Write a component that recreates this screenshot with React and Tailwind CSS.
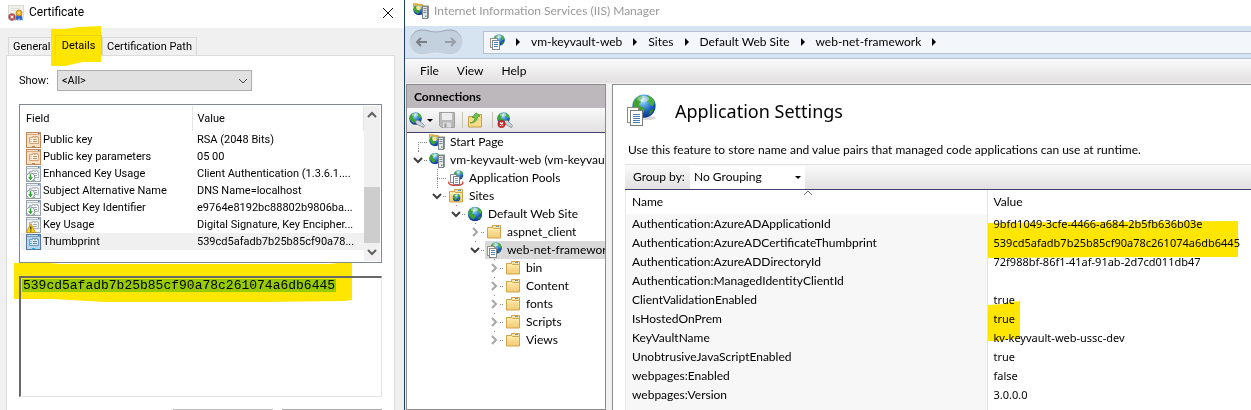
import React, { useId } from "react";

function Globe({ x = 0, y = 0, s = 16 }) {
  const id = useId();
  return (
    <svg x={x} y={y} width={s} height={s} viewBox="0 0 32 32">
      <defs>
        <radialGradient id={id} cx="0.42" cy="0.25" r="0.8">
          <stop offset="0" stopColor="#c4e8fb" />
          <stop offset="0.3" stopColor="#5aa9e6" />
          <stop offset="0.65" stopColor="#1c5cc0" />
          <stop offset="1" stopColor="#0a2a78" />
        </radialGradient>
      </defs>
      <circle cx="16" cy="16" r="15.500" fill={`url(#${id})`} />
      <path d="M2 12C4 6 8 3 12 2l2 3-3 3 1 3-3 2 1 3 4 1 3 3-1 4-4 3C5 23 1 18 2 12z" fill="#3fa32c" />
      <path d="M20 2c5 1 8 4 10 9l-2 5-3-1-2-4-3-1 1-4z" fill="#48b034" />
      <path d="M24 22l5-2c-1 4-4 7-7 8z" fill="#2f8f27" />
      <ellipse cx="15" cy="6.500" rx="8" ry="4" fill="#fff" opacity="0.400" />
    </svg>
  );
}

function Pages({ x = 0, y = 0, w = 16, h = 19 }) {
  return (
    <svg x={x} y={y} width={w} height={h} viewBox="0 0 16 19">
      <rect x="0.5" y="0.5" width="11" height="15" fill="#fffef6" stroke="#8f897e" />
      <rect x="3.5" y="3.5" width="12" height="15" fill="#fff" stroke="#77797e" />
      <path d="M6 7.5h7M6 9.5h7M6 11.5h7M6 13.5h7M6 15.5h7" stroke="#3f7fba" />
    </svg>
  );
}

function SiteIcon() {
  return (
    <svg viewBox="0 0 16 16" className="size-4 shrink-0">
      <Globe x={4} y={0} s={12} />
      <rect x="1.500" y="4.500" width="7" height="9" fill="#fffef6" stroke="#9a958a" />
      <rect x="3.500" y="6.500" width="7" height="9" fill="#fff" stroke="#85878c" />
      <path d="M5 8.500h4M5 10.500h4M5 12.500h4" stroke="#4a86bd" />
    </svg>
  );
}

function SettingsIcon() {
  return (
    <svg viewBox="0 0 32 34" className="h-[34px] w-8 shrink-0">
      <ellipse cx="21" cy="24" rx="9" ry="2" fill="#000" opacity="0.150" />
      <Globe x={6} y={0} s={24} />
      <Pages x={1} y={13} w={16} h={19} />
    </svg>
  );
}

function GlobeIcon() {
  return (
    <svg viewBox="0 0 16 16" className="size-4 shrink-0">
      <Globe x={0.5} y={0.5} s={15} />
    </svg>
  );
}

function ServerIcon({ star = false }) {
  return (
    <svg viewBox="0 0 16 16" className="size-4 shrink-0">
      <Globe x={0} y={0.5} s={12} />
      {star && (
        <>
          <path d="M.5 4V1h3.500l1 1h4v3" fill="none" stroke="#f0a51f" strokeWidth="1.600" />
          <path d="M3 4l3-1 2 2-1 2-3 0z" fill="#ffe08a" />
        </>
      )}
      <path d="M9 3.500l1.500-1H16v12L14.500 16H9z" fill="#8a9096" />
      <rect x="9.5" y="3.5" width="5" height="12" fill="#e4e8ea" stroke="#7b848a" />
      <path d="M10.500 5.500h3M10.500 7.500h3M10.500 9.500h3" stroke="#7f888e" />
      <rect x="12" y="12.500" width="1.500" height="1.500" fill="#53b43b" />
    </svg>
  );
}

function PoolsIcon() {
  return (
    <svg viewBox="0 0 16 16" className="size-4 shrink-0">
      <Globe x={5.500} y={0} s={10} />
      <path d="M1 11.500c-1.500 3 3 4 7 4s8-1 6.500-4" fill="none" stroke="#d5403a" strokeWidth="1.300" />
      <path d="M2.500 4.500h6v8h-6z" fill="#fff" stroke="#85898e" />
      <path d="M5.500 6.500h6v8h-6z" fill="#fff" stroke="#75797e" />
      <path d="M7 8.500h3M7 10.500h3M7 12.500h3" stroke="#6f9cc4" />
    </svg>
  );
}

function FolderIcon({ globe = false }) {
  const id = useId();
  return (
    <svg viewBox="0 0 16 16" className="size-4 shrink-0">
      <defs>
        <linearGradient id={id} x1="0" y1="0" x2="0" y2="1">
          <stop offset="0" stopColor="#fdeaa6" />
          <stop offset="1" stopColor="#f2cb76" />
        </linearGradient>
      </defs>
      <path d="M6.500 4V1.500h8V5" fill="#f7e3a4" stroke="#cfa44b" />
      <path d="M10 2.500h3" stroke="#5f9fd0" />
      <path d="M1.500 3.500h5l1 1h7v9.500h-13z" fill={`url(#${id})`} stroke="#cfa44b" />
      <path d="M2 5.500h12" stroke="#fff3c6" strokeWidth="0.600" />
      {globe && <Globe x={4.500} y={5.500} s={8} />}
    </svg>
  );
}

function CertIcon() {
  return (
    <svg viewBox="0 0 16 16" className="size-4 shrink-0">
      <rect x="0.500" y="0.500" width="15" height="12" fill="#f1f0ec" stroke="#dad9d3" />
      <path d="M3 3.500h9M3 5.500h5" stroke="#e0ded7" />
      <path d="M8.500 10l-1.500 5.500 2-1 1 1.500 1-3 1 3 1-1.500 2 1L13.500 10z" fill="#2b66cf" />
      <circle cx="11" cy="8" r="3" fill="#f0b323" stroke="#b97c0e" strokeWidth="0.700" />
      <circle cx="11" cy="8" r="1.100" fill="#fde99a" />
      <circle cx="4" cy="12" r="3.600" fill="#c63a36" stroke="#a09a9a" strokeWidth="0.800" />
      <path d="M2.600 10.600l2.800 2.800M5.400 10.600l-2.800 2.800" stroke="#fff" strokeWidth="1.200" />
    </svg>
  );
}

const FIELD_COLORS = {
  v1: ["#fbe0c4", "#c0885a"],
  ext: ["#eef1f4", "#98a0a8"],
  crit: ["#eef1f4", "#98a0a8"],
  prop: ["#b4d6f0", "#55799c"],
};

function FieldIcon({ kind }) {
  const [fill, line] = FIELD_COLORS[kind];
  return (
    <svg viewBox="0 0 16 16" className="size-4 shrink-0">
      <rect x="0.500" y="0.500" width="14" height="15" fill={fill} stroke={line} />
      <path d="M1 2.500h13" stroke={line} strokeWidth="0.600" />
      <path d="M3.500 5.500h3v-1h2v1h1v-1h2v1h1v6h-9z" fill="#fff" fillOpacity="0.500" stroke={line} strokeWidth="0.700" />
      <path d="M4.500 7.500h1M4.500 9.500h1M7 7.500h4M7 9.500h4" stroke={line} strokeWidth="0.900" />
      <path d="M6 14.500h3" stroke={kind === "prop" ? "#17b4f5" : line} />
      <path d="M12 1.500h1.500" stroke="#3a78c2" />
      {kind === "prop" && <path d="M4 9.500h2" stroke="#17b4f5" />}
      {kind === "ext" && (
        <>
          <circle cx="4.500" cy="11.200" r="4.200" fill="#fff" stroke="#7d8388" strokeWidth="0.900" />
          <path d="M3.700 8.200h1.600v3h1.600l-2.400 3-2.400-3h1.600z" fill="#2ca32c" />
        </>
      )}
      {kind === "crit" && (
        <>
          <path d="M4.800 6.500l4.700 9H.2z" fill="#fcd116" stroke="#b98a05" strokeWidth="0.700" />
          <path d="M4.800 9.500v3M4.800 13.500v1" stroke="#222" strokeWidth="1.200" />
        </>
      )}
    </svg>
  );
}

function Chevron({ dir = "down", bold = false, className = "" }) {
  const d = { down: "M1 3l4 4 4-4", up: "M1 7l4-4 4 4" }[dir];
  return (
    <svg viewBox="0 0 10 10" className={`size-[10px] shrink-0 ${className}`} fill="none" stroke="currentColor" strokeWidth={bold ? 2 : 1}>
      <path d={d} />
    </svg>
  );
}

const FIELDS = [
  ["v1", "Public key", "RSA (2048 Bits)"],
  ["v1", "Public key parameters", "05 00"],
  ["ext", "Enhanced Key Usage", "Client Authentication (1.3.6.1...."],
  ["ext", "Subject Alternative Name", "DNS Name=localhost"],
  ["ext", "Subject Key Identifier", "e9764e8192bc88802b9806ba..."],
  ["crit", "Key Usage", "Digital Signature, Key Encipher..."],
  ["prop", "Thumbprint", "539cd5afadb7b25b85cf90a78..."],
];

function CertificateDialog() {
  return (
    <section className="flex w-[404px] shrink-0 flex-col bg-[#f0f0f0] font-[Roboto,sans-serif] text-[11px] leading-[17px]">
      <header className="flex h-7 shrink-0 items-center gap-[5px] bg-white pr-[10px] pb-[3px] pl-2">
        <CertIcon />
        <h1 className="flex-1 text-[12px]">Certificate</h1>
        <button aria-label="Close" className="size-3">
          <svg viewBox="0 0 12 12" className="size-3" stroke="#111" fill="none">
            <path d="M1 1l10 10M11 1L1 11" />
          </svg>
        </button>
      </header>
      <div className="flex flex-1 flex-col pt-[7px] pr-[9px] pl-[6px]">
        <div role="tablist" className="flex h-5 shrink-0 items-end pl-[2px]">
          <button role="tab" aria-selected="false" className="h-[18px] w-[47px] border border-b-0 border-[#d9d9d9] pl-1 text-left">General</button>
          <div className="relative h-5 w-[47px]">
            <svg viewBox="0 0 51 41" className="absolute -top-[9px] -left-1 h-[41px] w-[51px]">
              <path d="M0 3l14 0 13-2 23-1v36l-18 0-18 4-14 0z" fill="#ffe600" />
            </svg>
            <button role="tab" aria-selected="true" className="relative h-full w-full border border-b-0 border-[#e9d31c]">Details</button>
          </div>
          <button role="tab" aria-selected="false" className="h-[18px] border border-b-0 border-[#d9d9d9] px-1">Certification Path</button>
        </div>
        <div className="flex flex-1 flex-col border border-b-0 border-[#dcdcdc] bg-white pt-[14px] pr-3 pl-3">
          <div className="flex shrink-0 items-center">
            <label htmlFor="show" className="w-[38px]">Show:</label>
            <div className="relative">
              <select id="show" className="block h-[21px] w-[195px] appearance-none border border-[#adadad] bg-[#e1e1e1] pl-1 text-[11px] leading-[17px]">
                <option>&lt;All&gt;</option>
              </select>
              <Chevron className="pointer-events-none absolute top-[6px] right-1 text-[#444]" />
            </div>
          </div>
          <div className="mt-[13px] flex h-[159px] shrink-0 border border-[#828790] p-px">
            <div className="flex-1">
              <table className="w-full table-fixed border-collapse text-left">
                <thead>
                  <tr className="h-[25px]">
                    <th className="w-[171px] border-r border-[#e5e5e5] p-0 pl-[5px] font-normal">Field</th>
                    <th className="border-r border-[#e5e5e5] p-0 pl-[5px] font-normal">Value</th>
                  </tr>
                </thead>
                <tbody>
                  {FIELDS.map(([kind, name, value]) => (
                    <tr key={name} className={`h-[17px] ${kind === "prop" ? "bg-[#f0f0f0]" : ""}`}>
                      <td className="p-0">
                        <div className="flex items-center gap-px whitespace-nowrap pl-[5px]">
                          <FieldIcon kind={kind} />
                          {name}
                        </div>
                      </td>
                      <td className="p-0 pl-[5px] whitespace-nowrap">{value}</td>
                    </tr>
                  ))}
                </tbody>
              </table>
            </div>
            <div className="flex w-4 flex-col items-center bg-[#f0f0f0] py-1">
              <Chevron dir="up" bold className="text-[#606060]" />
              <div className="flex-1" />
              <div className="h-14 w-full bg-[#cdcdcd]" />
              <Chevron dir="down" bold className="mt-1 text-[#606060]" />
            </div>
          </div>
          <div className="relative mt-[13px] h-[121px] shrink-0">
            <svg viewBox="0 0 338 39" className="absolute -top-[13px] -left-[5px] h-[39px] w-[338px]">
              <path d="M0 0h36l10 1h270l8-1h14v37l-8 1-80 1H90L40 36H0z" fill="#ffe600" />
            </svg>
            <div className="absolute top-[3px] left-[3px] h-[13px] w-[314px] bg-[#99cc00]" />
            <textarea
              aria-label="Thumbprint value"
              readOnly
              defaultValue="539cd5afadb7b25b85cf90a78c261074a6db6445"
              className="relative block h-full w-full resize-none border-t-2 border-r border-b border-l-2 border-t-[#696969] border-r-[#e3e3e3] border-b-[#e3e3e3] border-l-[#696969] bg-transparent px-[2px] pt-px font-['Liberation_Mono',monospace] text-[13px] leading-[13px]"
            />
          </div>
          <div className="mt-3 flex justify-end gap-[9px]">
            <button aria-label="Edit Properties" className="h-[23px] w-[100px] border border-[#bfbfbf] bg-[#cccccc]" />
            <button aria-label="Copy to File" className="h-[23px] w-[100px] border border-[#adadad] bg-[#e1e1e1]" />
          </div>
        </div>
      </div>
    </section>
  );
}

const CRUMBS = ["vm-keyvault-web", "Sites", "Default Web Site", "web-net-framework"];

function Triangle() {
  return (
    <svg viewBox="0 0 4 8" className="h-2 w-1 shrink-0">
      <path d="M0 0l4 4-4 4z" />
    </svg>
  );
}

const TREE = [
  { level: 0, icon: <ServerIcon star />, label: "Start Page", first: true },
  { level: 0, icon: <ServerIcon />, label: "vm-keyvault-web (vm-keyvault-web)", state: "open" },
  { level: 1, icon: <PoolsIcon />, label: "Application Pools" },
  { level: 1, icon: <FolderIcon globe />, label: "Sites", state: "open" },
  { level: 2, icon: <GlobeIcon />, label: "Default Web Site", state: "open" },
  { level: 3, icon: <FolderIcon />, label: "aspnet_client", state: "closed" },
  { level: 3, icon: <SiteIcon />, label: "web-net-framework", state: "open", selected: true },
  { level: 4, icon: <FolderIcon />, label: "bin", state: "closed" },
  { level: 4, icon: <FolderIcon />, label: "Content", state: "closed" },
  { level: 4, icon: <FolderIcon />, label: "fonts", state: "closed" },
  { level: 4, icon: <FolderIcon />, label: "Scripts", state: "closed" },
  { level: 4, icon: <FolderIcon />, label: "Views", state: "closed" },
];

const INDENT = ["pl-px", "pl-5", "pl-[39px]", "pl-[58px]", "pl-[77px]"];

function Branch({ state, first }) {
  return (
    <svg viewBox="0 0 20 18" className="h-[18px] w-5 shrink-0" fill="none">
      <g stroke="#8a8a8a" strokeDasharray="1 1">
        {!state && <path d={first ? "M10.500 9v9" : "M10.500 0v18"} />}
        {!state && <path d="M10 9.500h10" />}
        {state && <path d="M10.500 0v2M16 9.500h4" />}
      </g>
      {state === "open" && <path d="M6 7l4 4 4-4" stroke="#404040" strokeWidth="2" />}
      {state === "closed" && <path d="M8 5l4 4-4 4" stroke="#a6a6a6" strokeWidth="2" />}
    </svg>
  );
}

function Connections() {
  return (
    <aside className="flex w-[200px] shrink-0 flex-col overflow-hidden border border-[#8c8c8c] bg-white">
      <h2 className="flex h-[23px] shrink-0 items-center bg-[#bcb8bb] pl-[7px] font-bold">Connections</h2>
      <div className="flex h-[25px] shrink-0 items-center border-b border-[#41416b] bg-linear-to-b from-[#fafafa] to-[#e2e0e0] pl-[2px]">
        <button aria-label="Create connection" className="flex items-center gap-[2px]">
          <svg viewBox="0 0 16 16" className="size-4">
            <Globe x={0} y={0} s={13} />
            <path d="M6 9l3-1 4 3 2.500 2.500-1 2-3-1.500-4-2z" fill="#cdd5da" stroke="#6d7a84" strokeWidth="0.700" />
          </svg>
          <svg viewBox="0 0 6 3" className="h-[3px] w-[6px]"><path d="M0 0h6L3 3z" /></svg>
        </button>
        <button aria-label="Save" className="ml-[6px]">
          <svg viewBox="0 0 16 16" className="size-4">
            <path d="M.5.500h15v15h-13l-2-2z" fill="#b9b9b9" stroke="#a0a0a0" />
            <rect x="3" y="1" width="10" height="7" fill="#ececec" />
            <rect x="4" y="10.500" width="8" height="5" fill="#dedede" />
            <rect x="5.500" y="11.500" width="2" height="4" fill="#999" />
          </svg>
        </button>
        <span className="ml-[7px] h-4 w-px bg-[#c9c5b4]" />
        <button aria-label="Up" className="ml-1">
          <svg viewBox="0 0 16 16" className="size-4">
            <path d="M1.500 4.500h7l1-2h5v12.500h-13z" fill="#f8dc87" stroke="#c9a046" />
            <path d="M3 11c4-1 5-3 4.500-5.500H5L9 .800l4 3.200-2.500.800c0 4-3 6-7.500 6.200z" fill="#6cc455" stroke="#2d8a22" strokeWidth="0.600" />
          </svg>
        </button>
        <span className="ml-[9px] h-4 w-px bg-[#c9c5b4]" />
        <button aria-label="Delete connection" className="ml-1">
          <svg viewBox="0 0 16 16" className="size-4">
            <Globe x={0} y={0} s={13} />
            <path d="M7 9l3-1 3 3 2.500 2.500-1 2-3-1.500-3-2z" fill="#cdd5da" stroke="#6d7a84" strokeWidth="0.700" />
            <circle cx="4.500" cy="12" r="3.700" fill="#d42a2a" stroke="#8f1b1b" strokeWidth="0.500" />
            <path d="M3 10.500l3 3M6 10.500l-3 3" stroke="#fff" strokeWidth="1.300" />
          </svg>
        </button>
      </div>
      <ul role="tree">
        {TREE.map((n) => (
          <li key={n.label} role="treeitem" aria-selected={!!n.selected} className={`flex h-[18px] items-center whitespace-nowrap ${INDENT[n.level]}`}>
            <Branch state={n.state} first={n.first} />
            <div className={`flex h-full flex-1 items-center gap-[5px] pl-px ${n.selected ? "bg-[#d9d9d9]" : ""}`}>
              {n.icon}
              {n.label}
            </div>
          </li>
        ))}
      </ul>
    </aside>
  );
}

const SETTINGS = [
  ["Authentication:AzureADApplicationId", "9bfd1049-3cfe-4466-a684-2b5fb636b03e"],
  ["Authentication:AzureADCertificateThumbprint", "539cd5afadb7b25b85cf90a78c261074a6db6445", "wide"],
  ["Authentication:AzureADDirectoryId", "72f988bf-86f1-41af-91ab-2d7cd011db47"],
  ["Authentication:ManagedIdentityClientId", ""],
  ["ClientValidationEnabled", "true"],
  ["IsHostedOnPrem", "true", "short"],
  ["KeyVaultName", "kv-keyvault-web-ussc-dev"],
  ["UnobtrusiveJavaScriptEnabled", "true"],
  ["webpages:Enabled", "false"],
  ["webpages:Version", "3.0.0.0"],
];

function Marker({ kind }) {
  if (kind === "wide")
    return (
      <svg viewBox="0 0 250 37" className="pointer-events-none absolute -top-3 left-0 h-[37px] w-[250px] mix-blend-multiply">
        <path d="M0 2l80-1 170-1v36l-120 0-130 1z" fill="#ffe600" />
      </svg>
    );
  return (
    <svg viewBox="0 0 32 40" className="pointer-events-none absolute -top-2 left-0 h-10 w-8 mix-blend-multiply">
      <path d="M0 4l16-1 6-2 10-1v38l-12 0-8 2H0z" fill="#ffe600" />
    </svg>
  );
}

function ApplicationSettings() {
  return (
    <main className="flex min-w-0 flex-1 flex-col border-t border-l border-[#8c8c8c] bg-white pl-3">
      <div className="flex h-[52px] shrink-0 items-center gap-[17px] pl-px">
        <SettingsIcon />
        <h2 className="font-['Noto_Sans',sans-serif] text-[18px] leading-6">Application Settings</h2>
      </div>
      <p className="h-[27px] shrink-0 pt-1 pl-[3px] whitespace-nowrap">
        Use this feature to store name and value pairs that managed code applications can use at runtime.
      </p>
      <div className="flex h-[26px] shrink-0 items-center border-t border-b border-t-[#e0e0e0] border-b-[#41416b] bg-linear-to-b from-[#fafafa] to-[#e2e0e0] pl-2">
        <label htmlFor="group" className="w-[57px]">Group by:</label>
        <div className="relative">
          <select id="group" className="block h-[23px] w-[115px] appearance-none bg-white pl-1 text-[12px]">
            <option>No Grouping</option>
          </select>
          <svg viewBox="0 0 6 3" className="pointer-events-none absolute top-[10px] right-1 h-[3px] w-[6px]"><path d="M0 0h6L3 3z" /></svg>
        </div>
      </div>
      <div className="relative flex flex-1 border-l border-[#e8e8e8]">
        <svg viewBox="0 0 8 4" className="absolute top-px left-[178px] h-1 w-2" fill="none" stroke="#666"><path d="M0 4l4-4 4 4" /></svg>
        <table className="h-full w-full table-fixed border-collapse text-left">
          <thead>
            <tr className="h-6">
              <th className="w-[361px] border-r border-[#e0e4ea] p-0 pl-[6px] font-normal">Name</th>
              <th className="p-0 pl-[6px] font-normal">Value</th>
            </tr>
          </thead>
          <tbody>
            {SETTINGS.map(([name, value, mark]) => (
              <tr key={name} className="h-[19px]">
                <td className="border-r border-[#e0e4ea] bg-[#f7f7f7] p-0 pl-[6px]">{name}</td>
                <td className="relative p-0 pl-[6px] font-['Noto_Sans',sans-serif] text-[11px]">
                  {value}
                  {mark && <Marker kind={mark} />}
                </td>
              </tr>
            ))}
            <tr>
              <td className="border-r border-[#e0e4ea] bg-[#f7f7f7] p-0" />
              <td className="p-0" />
            </tr>
          </tbody>
        </table>
      </div>
    </main>
  );
}

function NavPill() {
  const id = useId();
  return (
    <svg viewBox="0 0 54 27" className="absolute inset-0 h-full w-full">
      <defs>
        <linearGradient id={id} x1="0" y1="0" x2="0" y2="1">
          <stop offset="0" stopColor="#93a1b1" />
          <stop offset="0.400" stopColor="#c3d0de" />
          <stop offset="1" stopColor="#e4edf6" />
        </linearGradient>
      </defs>
      <path d="M13 1c6 0 8 2 14 2s8-2 14-2c16 0 16 25 0 25-6 0-8-2-14-2s-8 2-14 2C-3 26-3 1 13 1z" fill="#c3d0de" stroke={`url(#${id})`} />
    </svg>
  );
}

function IisManager() {
  return (
    <section className="flex min-w-0 flex-1 flex-col bg-[#f3f2f2] text-[12px] leading-[18px]">
      <header className="flex h-[26px] shrink-0 items-center gap-[5px] bg-white pb-1 pl-2 text-[#999]">
        <ServerIcon star />
        <h1>Internet Information Services (IIS) Manager</h1>
      </header>
      <div className="flex h-[33px] shrink-0 items-center gap-5 border-b border-[#b3c1d2] bg-[#d6e3f0] pl-1">
        <div className="relative flex h-[27px] w-[54px] items-center justify-between px-[6px]">
          <NavPill />
          <button aria-label="Back" className="relative">
            <svg viewBox="0 0 12 10" className="h-[10px] w-3" fill="none" stroke="#7b7f84" strokeWidth="2"><path d="M12 5H2M6 1L2 5l4 4" /></svg>
          </button>
          <button aria-label="Forward" className="relative">
            <svg viewBox="0 0 12 10" className="h-[10px] w-3" fill="none" stroke="#999fa6" strokeWidth="2"><path d="M0 5h10M6 1l4 4-4 4" /></svg>
          </button>
        </div>
        <nav aria-label="Address" className="flex h-[23px] flex-1 items-center gap-[11px] border border-r-0 border-[#b3c1d2] bg-[#f3f7fb] pl-[5px]">
          <SiteIcon />
          <Triangle />
          {CRUMBS.map((c) => (
            <React.Fragment key={c}>
              <a href="#">{c}</a>
              <Triangle />
            </React.Fragment>
          ))}
        </nav>
      </div>
      <div role="menubar" className="flex h-6 shrink-0 items-center gap-[18px] bg-linear-to-b from-[#fafafa] to-[#e2e0e0] pl-[15px]">
        <button role="menuitem">File</button>
        <button role="menuitem">View</button>
        <button role="menuitem">Help</button>
      </div>
      <div className="flex min-h-0 flex-1 gap-[6px] pt-px pl-px">
        <Connections />
        <ApplicationSettings />
      </div>
    </section>
  );
}

export default function App() {
  return (
    <div className="flex h-screen overflow-hidden bg-white font-[Lato,sans-serif] text-black">
      <CertificateDialog />
      <div className="w-px shrink-0 bg-[#1f3f66]" />
      <IisManager />
    </div>
  );
}
